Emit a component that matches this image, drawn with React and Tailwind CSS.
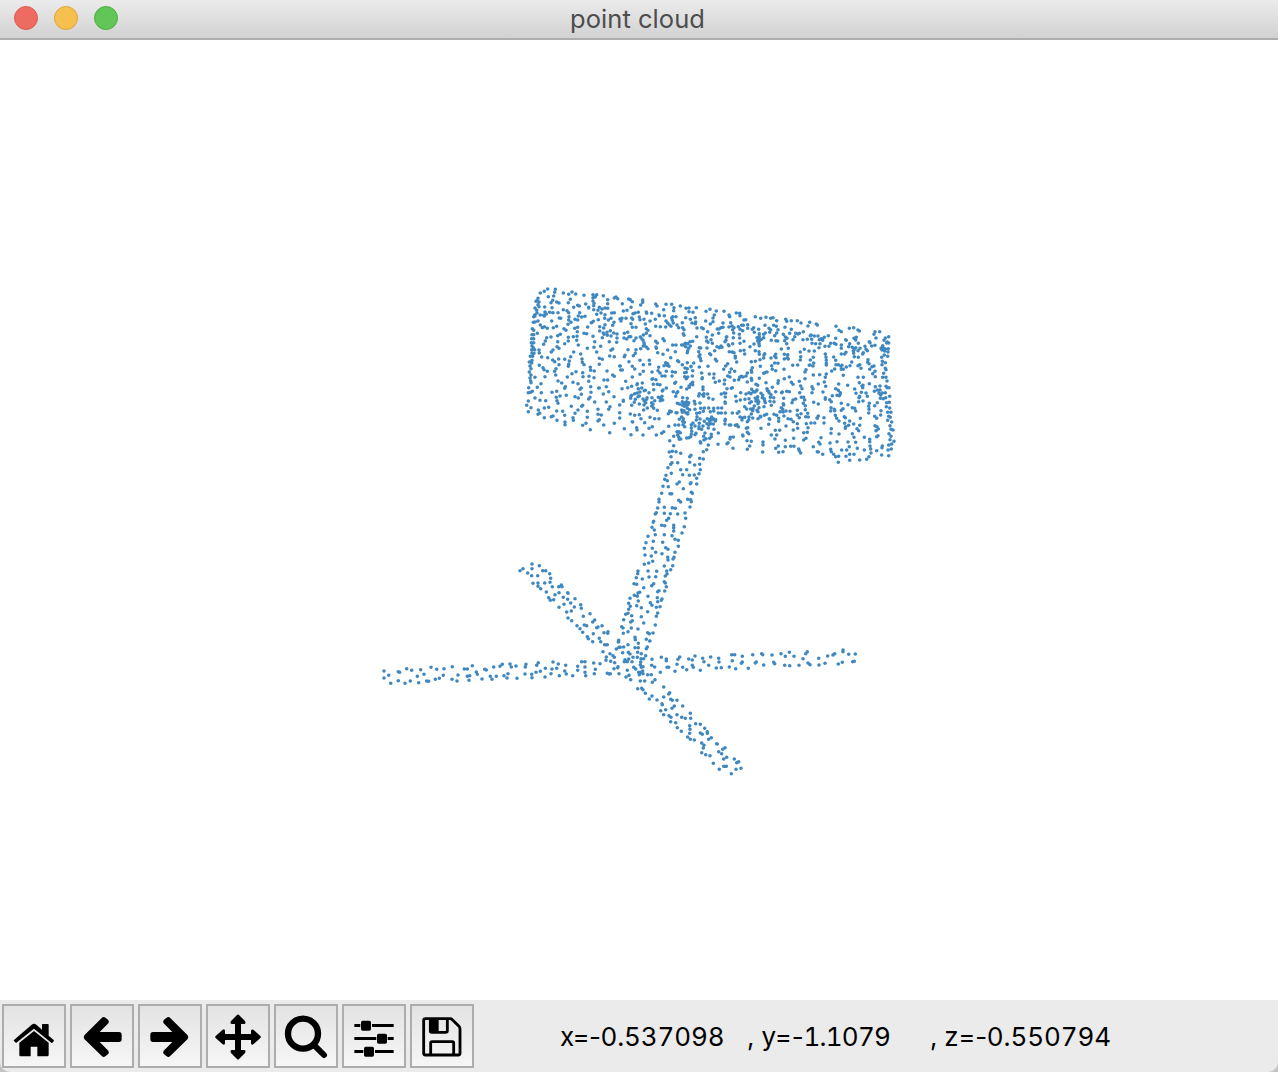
import React from "react";

// Dot coordinates are stored in thirds of a pixel, relative to each cluster's origin.
const LEFT_ARMS = "450,62 459,56 473,69 486,42 486,56 508,47 518,62 527,62 539,71 485,77 503,77 542,85 489,100 504,99 504,109 512,116 524,99 540,97 547,110 529,126 566,110 574,105 576,110 555,134 567,128 536,143 541,151 551,149 580,142 593,128 594,130 593,148 615,146 602,159 582,163 567,172 613,171 632,164 634,175 590,186 604,183 594,204 605,212 640,199 660,191 674,210 668,216 621,227 630,236 643,225 650,227 638,247 684,231 680,233 696,227 714,245 702,248 713,250 652,260 655,266 670,251 688,265 668,275 692,275 704,284 712,284 699,305 709,321 708,331 42,363 42,384 56,376 62,400 85,365 89,367 85,392 110,356 105,400 125,361 121,393 152,359 142,379 146,398 162,373 170,393 176,394 183,352 200,358 196,388 208,385 222,356 220,376 247,350 246,388 264,375 261,393 283,357 292,357 292,379 299,377 297,391 307,347 319,366 322,373 336,387 344,358 349,360 361,379 366,388 371,351 379,379 390,349 397,343 402,377 411,384 414,371 420,342 424,351 438,348 441,385 468,343 466,351 465,372 485,373 486,383 505,338 500,346 498,367 511,364 526,355 525,381 549,336 546,357 543,371 560,355 565,342 568,377 587,346 584,363 589,372 608,377 635,335 645,335 623,349 623,361 645,351 645,367 647,377 671,339 676,358 673,371 690,341 712,370 718,372";
const STEM = "178,66 187,64 198,65 212,70 183,80 243,76 239,80 186,98 203,98 239,97 182,103 174,113 254,105 269,103 269,85 280,87 280,65 212,119 230,119 184,130 168,136 218,134 238,136 253,135 267,131 271,119 260,145 260,162 164,148 172,152 208,156 201,162 243,158 241,161 159,169 175,170 220,176 155,190 180,191 185,191 244,187 247,190 147,208 147,216 206,211 212,216 233,208 242,209 244,215 143,234 163,232 187,233 196,235 240,231 136,252 139,248 163,250 181,251 203,252 225,249 227,265 176,265 170,271 131,274 130,277 155,286 164,287 191,286 191,293 191,303 223,290 126,292 133,300 216,309 114,319 136,314 163,314 186,317 195,328 205,331 130,334 108,338 158,337 205,349 103,355 127,355 167,353 174,358 137,367 195,367 156,371 105,375 124,378 173,382 192,382 189,387 174,390 103,403 116,399 128,394 163,408 188,407 182,419 84,423 83,431 114,423 140,424 170,423 171,432 79,443 97,447 117,441 137,440 166,438 72,461 80,463 131,461 125,467 163,455 166,459 169,470 101,473 164,483 143,485 147,482 84,489 89,487 73,496 82,499 114,499 60,505 142,503 156,507 154,511 85,513 143,515 121,518 126,526 56,520 61,529 80,527 94,533 139,532 150,530 56,538 113,545 143,549 47,553 54,550 65,557 139,559 94,560 41,569 67,572 62,576 101,579 136,585 35,590 39,594 64,594 84,597 54,605 40,610 113,608 118,611 129,609 75,622 76,629 26,631 25,636 109,628 120,633";
const RIGHT_ARMS = "26,5 54,14 85,10 119,3 112,21 109,26 75,23 85,23 19,27 27,22 31,22 41,21 0,41 9,47 13,52 2,64 14,68 24,80 12,86 1,101 27,101 38,38 55,37 60,42 83,37 94,41 107,47 69,52 45,59 56,57 43,65 52,65 66,65 82,52 93,56 101,56 92,66 91,74 99,80 23,83 52,91 71,82 77,87 94,82 86,97 98,93 88,104 99,101 92,97 48,111 57,106 62,119 91,123 104,123 113,104 124,104 135,119 127,127 126,58 125,76 134,81 154,52 169,57 169,62 151,97 171,82 176,82 195,94 201,73 204,58 209,51 218,82 230,89 236,57 247,60 255,48 247,76 250,82 271,91 278,55 282,65 296,76 302,51 326,55 327,66 319,84 334,83 365,44 374,44 367,62 358,81 377,86 397,49 397,66 394,70 415,85 428,44 439,66 436,69 455,41 458,44 461,75 486,45 491,67 494,71 513,41 526,49 524,76 538,37 539,77 552,49 567,76 579,56 587,41 592,35 594,69 600,74 626,55 627,75 645,70 653,48 669,45 674,41 685,72 697,67 699,30 699,35 716,43 736,42 728,65 733,64 83,146 95,145 99,149 106,160 118,177 126,168 161,141 161,171 179,158 176,162 141,180 156,191 157,194 182,178 187,181 201,181 193,198 186,205 218,198 152,212 167,209 161,224 177,227 183,232 201,224 182,245 197,248 215,232 226,235 241,220 242,235 202,263 214,274 239,257 240,268 239,280 257,251 271,253 284,265 292,275 292,280 271,279 277,283 233,291 241,298 253,300 296,298 304,293 275,309 282,316 280,324 320,311 322,312 345,323 338,328 275,338 287,344 300,347 326,335 335,341 310,370 341,357 350,352 373,357 386,365 380,368 328,388 341,379 349,379 378,388 393,385 364,401";
const PANEL_LEFT = "91,39 103,34 113,27 136,28 134,37 131,48 115,50 160,39 176,43 186,36 197,42 222,46 249,44 260,44 249,53 256,51 280,47 293,59 313,54 318,51 323,56 337,71 356,57 84,55 81,62 87,66 78,64 84,74 87,80 75,84 80,91 81,99 74,105 71,110 75,108 70,127 75,126 84,123 91,135 97,143 67,146 71,151 82,160 66,164 71,164 65,176 71,176 64,188 71,188 66,198 70,203 65,209 74,209 66,219 72,220 61,229 68,229 58,246 66,241 65,249 60,258 63,266 58,276 63,285 60,294 62,303 63,308 56,323 67,334 55,338 62,337 55,363 50,376 63,383 55,395 85,390 84,403 89,400 103,413 75,354 90,361 107,362 94,338 82,322 93,311 103,384 116,382 124,410 129,408 141,421 140,393 158,394 164,406 165,426 165,434 189,413 190,421 184,379 195,400 204,390 215,379 218,376 218,436 228,430 232,412 232,394 241,449 264,388 264,403 274,405 268,419 264,423 281,435 299,458 313,430 329,414 329,398 343,446 123,68 126,83 105,96 119,97 129,98 128,61 140,66 147,69 104,81 175,68 181,58 160,89 171,92 176,98 177,110 176,120 183,127 174,133 144,98 152,115 148,114 125,123 103,108 91,105 101,106 109,102 103,140 112,145 130,143 140,139 162,146 168,151 143,167 151,163 123,171 110,173 106,183 101,193 87,210 88,219 95,231 113,233 124,216 129,210 143,185 141,200 147,205 164,191 175,183 175,172 190,170 200,181 205,195 201,169 194,145 203,142 202,155 222,160 230,161 249,169 254,185 252,202 260,216 272,199 232,205 212,222 191,216 182,230 164,238 178,243 176,253 175,259 146,237 128,240 134,245 147,254 138,266 134,274 137,285 112,274 99,263 102,269 88,256 75,292 105,290 172,291 186,281 198,275 218,278 219,290 222,254 216,237 217,247 241,262 242,271 253,273 237,289 252,293 236,304 268,253 268,235 277,238 299,228 313,230 303,211 308,207 282,300 293,300 291,273 308,285 313,289 331,258 332,270 337,270 329,258 345,226 343,230 357,245 354,209 144,303 155,309 166,320 164,325 126,337 140,334 150,348 139,352 141,362 144,370 169,346 189,307 204,311 214,324 210,328 195,350 205,354 214,343 242,320 243,337 240,352 236,357 254,366 266,324 268,324 289,320 296,335 280,342 312,350 289,366 300,380 296,388 329,375 340,361 340,364 347,304 336,326 353,323 191,82 203,76 208,78 209,98 205,108 203,120 227,72 236,84 225,109 249,63 252,70 251,77 236,82 251,89 268,82 276,87 285,84 293,85 264,91 260,103 273,99 285,104 293,71 195,118 215,111 245,128 250,124 265,119 284,115 295,120 303,115 313,98 305,99 340,93 351,91 348,115 333,123 336,115 330,117 312,127 308,136 285,134 269,140 281,144 233,141 269,153 280,159 291,157 301,152 311,159 321,162 282,163 292,166 303,168 321,174 320,187 298,185 343,160 353,157 342,174 350,177 357,170 244,128 277,173";
const PANEL_RIGHT = "424,155 448,145 461,143 474,150 478,153 525,155 539,155 522,163 556,174 566,170 552,181 562,186 560,189 566,189 548,197 551,205 556,207 565,206 564,216 545,232 553,225 563,229 547,244 556,248 546,254 556,265 558,269 551,280 548,292 558,292 561,303 558,319 562,323 567,323 540,330 547,339 556,338 542,345 550,356 557,353 569,349 560,368 568,367 559,380 569,384 563,397 573,397 566,409 571,412 563,421 575,426 570,437 573,448 579,450 567,461 573,469 570,479 582,484 575,492 566,495 574,507 564,510 566,527 547,498 546,503 545,525 530,512 513,519 507,530 500,538 479,540 462,523 449,523 449,541 438,529 415,547 416,529 407,530 425,510 440,510 493,472 509,478 509,485 510,498 512,507 493,510 534,467 530,470 457,461 476,452 471,446 479,436 437,440 446,436 436,445 433,410 436,413 449,423 461,432 481,415 434,430 462,472 444,486 467,487 448,500 472,505 424,370 429,386 444,374 424,391 464,385 467,393 457,383 476,365 498,339 488,323 489,316 464,327 468,340 443,316 430,286 421,338 421,342 479,349 484,337 477,353 502,349 489,363 508,370 506,379 507,388 506,399 474,292 490,292 478,308 508,311 486,318 455,246 474,257 483,265 479,254 504,239 507,251 503,247 516,260 522,258 509,268 525,274 526,290 518,281 439,261 450,257 430,268 423,259 426,256 424,268 439,181 437,179 462,175 469,172 467,180 475,190 449,191 424,195 424,205 424,222 434,222 438,217 446,200 457,202 462,210 467,203 460,212 461,220 474,212 475,232 463,230 480,205 488,222 490,218 495,199 498,208 502,212 508,185 510,188 515,198 528,174 525,196 543,205 546,210 554,213 526,320 523,334 532,330 540,318 537,340 541,355 532,368 524,377 543,392 542,405 531,440 535,447 525,437 528,452 530,415 524,409";
const CENTER = "1,14 7,20 38,15 38,22 32,30 3,37 9,56 15,54 25,52 49,51 50,55 65,55 77,27 81,33 101,44 108,28 125,28 131,47 151,33 132,38 87,60 88,62 103,62 76,73 5,69 8,73 28,66 30,74 42,73 60,78 3,86 7,97 18,97 46,87 49,101 54,106 77,94 91,95 60,122 40,120 31,126 36,132 39,136 12,137 18,129 2,125 42,143 49,115 108,78 113,84 118,89 123,94 107,96 128,65 138,65 127,76 130,84 141,90 125,69 168,40 177,39 177,50 189,52 199,38 228,49 240,43 259,48 282,49 319,54 329,55 330,62 297,60 299,65 253,60 249,69 249,80 227,78 196,68 197,81 181,73 186,84 157,83 167,68 158,98 162,104 160,116 146,98 162,121 196,86 201,99 200,125 215,98 220,101 233,110 247,120 229,127 241,87 262,102 267,102 266,115 279,97 279,84 273,98 297,96 302,83 306,93 312,98 308,104 311,114 342,75 347,74 340,91 335,91 353,89 376,65 392,70 408,67 422,70 429,68 440,77 467,73 470,79 484,77 502,77 513,84 539,82 559,87 562,90 534,93 618,94 627,106 325,95 330,103 338,107 328,118 329,129 353,100 367,103 371,98 386,103 373,112 388,116 388,124 388,132 381,128 394,133 401,128 401,118 388,139 388,152 383,138 405,91 417,100 422,104 419,112 406,114 431,91 439,94 444,104 440,114 434,122 438,137 424,136 443,138 465,97 460,118 466,126 471,130 484,103 479,115 497,115 504,117 508,115 520,110 494,125 489,134 464,137 519,134 532,133 541,122 543,120 553,123 545,133 546,145 557,146 564,123 568,134 574,131 570,146 583,127 595,122 578,136 602,145 613,145 618,148 617,130 585,154 597,154 567,158 77,139 82,144 78,156 79,160 99,131 103,137 49,156 54,161 43,148 40,153 32,161 18,164 16,175 10,182 83,173 99,178 113,165 128,150 138,150 136,170 155,150 160,150 166,145 167,155 173,146 180,140 188,139 181,153 176,160 173,167 172,173 122,188 146,200 143,197 157,209 172,203 165,219 172,221 183,214 208,158 206,170 212,159 210,179 207,184 211,190 213,197 230,138 234,142 243,134 247,145 261,155 254,167 231,159 239,176 242,179 268,158 273,153 276,157 290,125 288,136 285,140 295,149 297,152 289,127 310,128 308,146 298,170 307,171 312,173 316,184 316,189 256,193 260,198 234,214 208,216 342,139 330,145 331,167 342,166 344,177 360,155 372,147 387,146 376,167 387,170 388,178 404,176 402,180 401,189 390,194 364,200 376,199 437,178 434,184 438,188 423,189 454,162 470,146 475,160 463,178 473,179 472,188 463,192 475,192 511,171 512,185 511,195 523,163 537,168 553,168 550,187 541,195 551,204 540,210 549,213 538,211 586,177 588,187 589,196 589,205 589,210 611,186 617,196 618,209 625,209 30,196 58,196 59,208 40,209 7,214 14,222 86,217 84,227 66,231 40,229 30,238 7,246 107,203 113,206 111,211 117,214 102,212 109,229 90,234 96,243 105,243 127,230 136,232 126,243 164,233 169,232 188,227 191,204 183,215 164,245 173,246 187,243 169,251 137,262 134,265 188,262 188,269 182,267 177,273 178,277 215,234 217,248 216,251 238,237 252,237 251,249 256,262 268,258 283,267 293,243 300,246 284,255 299,232 304,222 281,223 287,213 293,206 314,229 320,201 313,256 329,247 334,244 339,246 326,254 352,234 348,243 364,226 367,218 365,232 391,214 401,235 404,233 434,204 444,205 425,212 427,223 462,223 437,227 411,231 488,211 503,210 528,224 525,231 550,240 569,239 589,237 586,247 605,228 614,222 463,251 478,246 445,257 444,265 484,262 489,268 508,259 525,251 512,273 516,281 364,250 365,256 352,261 388,250 378,268 383,271 381,285 408,263 427,277 411,281 416,289 546,275 549,282 546,293 565,267 583,261 587,274 626,267 617,281 625,286 579,291 5,274 22,266 21,269 37,264 25,281 35,279 68,251 66,253 78,254 70,268 82,268 71,284 90,269 46,286 57,293 43,287 30,291 14,296 5,301 3,303 22,294 24,305 2,310 28,303 16,313 39,312 51,308 50,313 47,323 43,318 5,331 13,322 28,327 42,330 66,308 65,323 74,317 89,308 96,304 99,285 109,279 97,288 85,307 91,317 94,313 98,315 69,328 66,333 71,340 82,346 65,333 130,290 140,294 143,290 153,277 170,282 137,304 158,308 157,320 163,323 172,310 170,320 176,323 169,330 157,330 148,327 142,325 163,334 174,329 193,319 195,327 210,324 208,296 218,299 222,296 219,284 221,304 206,303 233,297 236,309 249,313 219,276 274,297 283,294 287,295 286,306 286,325 285,321 304,280 307,278 291,281 332,293 317,304 319,319 331,315 365,283 357,293 348,297 357,311 363,296 345,313 375,291 379,288 370,290 364,320 359,324 383,305 376,310 383,315 378,318 373,333 386,320 384,326 387,338 393,295 398,301 403,311 404,318 406,323 397,308 413,287 417,293 423,299 421,307 431,308 420,319 432,320 424,331 437,290 455,293 457,291 470,289 478,290 509,293 461,310 460,326 461,330 497,312 489,315 486,323 514,307 521,307 524,315 520,325 526,332 551,322 565,327 586,308 586,313 607,302 621,301 628,302 599,314 604,320 14,361 28,359 1,357 33,371 41,345 52,339 44,383 8,381 60,367 74,371 87,371 119,348 124,350 115,356 138,353 141,353 121,350 155,345 157,352 162,347 172,340 179,344 173,353 173,357 168,354 155,366 160,371 148,373 158,379 200,355 209,353 220,349 212,340 195,343 201,365 223,339 236,339 241,350 251,340 251,348 264,339 275,339 265,354 274,354 286,354 286,373 285,377 285,387 298,390 302,390 316,391 321,389 325,395 322,355 330,366 337,369 336,375 344,367 352,380 356,375 357,366 307,354 327,350 344,335 350,342 364,357 369,341 368,347 362,342 368,369 381,346 384,350 384,371 392,366 403,361 410,358 391,364 402,335 418,371 419,373 416,388 432,358 440,361 446,370 446,379 450,350 454,338 458,343 468,348 480,349 462,363 459,351 474,371 483,373 502,346 502,360 513,356 490,380 502,386 508,368 526,344 533,355 527,365 535,366 529,386 543,384 554,384 561,369 565,363 562,370 582,384 582,368 602,348 603,338 613,343 614,347 616,361 620,370 627,378 7,380 20,398 21,405 3,419 39,420 57,400 67,395 79,420 95,415 101,410 116,394 135,390 146,390 159,389 163,382 147,410 151,413 141,410 143,420 146,426 148,433 152,432 131,424 119,437 131,452 127,469 138,470 152,475 184,399 184,389 185,409 184,418 182,425 170,429 177,428 164,395 189,384 199,375 195,393 208,385 210,372 219,393 223,379 232,371 236,389 239,378 240,384 242,371 245,366 250,371 257,374 246,374 250,387 256,378 231,386 242,386 235,399 215,403 195,419 198,415 207,395 207,401 225,414 221,424 228,431 222,435 211,440 212,444 220,470 230,464 252,403 265,414 244,418 244,425 239,430 235,450 264,448 301,427 310,426 300,432 294,443 291,446 309,460 325,395 338,420 339,423 349,400 353,398 352,412 356,416 351,437 364,439 359,453 352,463 393,400 399,441 399,450 398,471 424,420 436,406 449,406 468,393 440,420 435,432 466,436 445,453 437,460 446,472 466,455 482,454 492,454 459,470 506,462 508,467 512,474 490,405 503,400 521,413 532,412 534,398 528,430 521,435 491,430 573,428 566,442 570,447 550,455 562,470 565,471 600,444 602,463 604,470 621,440 627,417 604,401 603,415 611,478 578,478";

const parse = (text, ox, oy) =>
  text.split(" ").map((pair) => {
    const [x, y] = pair.split(",").map(Number);
    return [ox + x / 3, oy + y / 3];
  });

const CLOUD = [
  ...parse(LEFT_ARMS, 370, 550),
  ...parse(STEM, 610, 430),
  ...parse(RIGHT_ARMS, 610, 640),
  ...parse(PANEL_LEFT, 510, 280),
  ...parse(PANEL_RIGHT, 700, 280),
  ...parse(CENTER, 630, 295),
]
  .map(([x, y]) => `M${x.toFixed(1)} ${(y - 40).toFixed(1)}h0`)
  .join("");

function ToolButton({ label, viewBox, children }) {
  return (
    <button
      aria-label={label}
      className="h-16 w-16 shrink-0 border-2 border-[#adadad] bg-linear-to-b from-[#e3e3e3] to-[#f6f6f6] text-black"
    >
      <svg viewBox={viewBox} className="block h-[60px] w-[60px]" fill="currentColor">
        {children}
      </svg>
    </button>
  );
}

function Toolbar() {
  return (
    <div className="flex gap-1 pl-0.5 pt-1">
      <ToolButton label="Home" viewBox="12 48 180 180">
        <path d="M102 123 L146 158 V195 Q146 199 142 199 H112 V170 H92 V199 H62 Q58 199 58 195 V158Z" />
        <path d="M42 150 L95 104 Q102 99 109 104 L126 119 V104 Q126 102 128 102 H144 Q146 102 146 104 V137 L161 150 Q163 152 161 154 L157 158 Q155 160 152 157 L102 116 L51 157 Q48 160 46 157 L42 153Q40 151 42 150Z" />
      </ToolButton>
      <ToolButton label="Back" viewBox="216 48 180 180">
        <path d="M253 136 L306 83 Q311 79 316 83 L324 89 Q329 94 325 100 L299 126 H357 Q365 126 365 134 V148 Q365 156 357 156 H299 L325 182 Q329 188 324 193 L316 199 Q311 203 306 199 L253 147 Q249 141 253 136Z" />
      </ToolButton>
      <ToolButton label="Forward" viewBox="420 48 180 180">
        <path transform="translate(816 0) scale(-1 1)" d="M253 136 L306 83 Q311 79 316 83 L324 89 Q329 94 325 100 L299 126 H357 Q365 126 365 134 V148 Q365 156 357 156 H299 L325 182 Q329 188 324 193 L316 199 Q311 203 306 199 L253 147 Q249 141 253 136Z" />
      </ToolButton>
      <ToolButton label="Pan" viewBox="-96 48 180 180">
        <path d="M-9 75 Q-6 72 -3 75 L15 93 Q19 102 12 102 H3 V132 H33 V123 Q33 117 40 119 L61 138 Q64 141 61 144 L40 163 Q33 167 33 159 V150 H3 V180 H12 Q19 180 15 189 L-3 207 Q-6 210 -9 207 L-27 189 Q-31 180 -24 180 H-15 V150 H-45 V159 Q-45 167 -52 163 L-73 144 Q-76 141 -73 138 L-52 119 Q-45 115 -45 123 V132 H-15 V102 H-24 Q-31 102 -27 93Z" />
      </ToolButton>
      <ToolButton label="Zoom" viewBox="108 48 180 180">
        <circle cx="189" cy="131" r="45" fill="none" stroke="currentColor" strokeWidth="19" />
        <path d="M223 166 L252 195" fill="none" stroke="currentColor" strokeWidth="18" strokeLinecap="round" />
      </ToolButton>
      <ToolButton label="Configure subplots" viewBox="312 48 180 180">
        <path d="M343 102H361V111H343ZM396 102H461V111H396ZM343 141H409V150H343ZM443 141H461V150H443ZM343 180H370V189H343ZM405 180H461V189H405Z" />
        <rect x="363" y="92" width="30" height="30" rx="5" />
        <rect x="411" y="131" width="30" height="30" rx="5" />
        <rect x="372" y="170" width="30" height="30" rx="5" />
      </ToolButton>
      <ToolButton label="Save" viewBox="516 48 180 180">
        <path d="M555 86 H630 Q634 86 637 89 L657 109 Q660 112 660 117 V190 Q660 195 655 195 H556 Q551 195 551 190 V91 Q551 86 556 86Z M571 86 V123 Q571 127 575 127 H617 Q622 127 622 123 V86 M572 195 V159 Q572 155 576 155 H637 Q641 155 641 159 V195" fill="none" stroke="currentColor" strokeWidth="8.5" />
        <path d="M568 86H596V128H572Q568 128 568 124Z" />
      </ToolButton>
    </div>
  );
}

export default function App() {
  return (
    <div className="flex h-[1072px] w-[1278px] flex-col overflow-hidden bg-[#c4c4c4] font-['Inter',sans-serif]">
      <header className="grid h-10 shrink-0 grid-cols-[1fr_auto_1fr] border-b-2 border-[#adadad] bg-linear-to-b from-[#ebebeb] to-[#d2d2d2]">
        <div className="flex gap-4 pl-3.5 pt-1.5">
          <span className="h-6 w-6 rounded-full border border-[#df5a50] bg-[#ed6b60]" />
          <span className="h-6 w-6 rounded-full border border-[#dda440] bg-[#f6c04f]" />
          <span className="h-6 w-6 rounded-full border border-[#4fad43] bg-[#62c656]" />
        </div>
        <h1 className="-translate-x-[1.5px] text-[25.5px] leading-[38px] tracking-[0.05px] text-[#4d4d4d]">point cloud</h1>
      </header>

      <main className="h-[960px] shrink-0 bg-white">
        <svg viewBox="0 0 1278 960" className="block h-[960px] w-[1278px]">
          <path d={CLOUD} fill="none" stroke="#3e87bf" strokeWidth="3.6" strokeLinecap="round" />
        </svg>
      </main>

      <footer className="flex h-[72px] shrink-0 rounded-b-[10px] bg-[#ebebeb]">
        <Toolbar />
        <div className="flex pl-[86px] pt-[18px] text-[26px] leading-[38px] text-black">
          <div className="w-[187px] whitespace-pre">
            <span className="tracking-[-0.7px]">x=-</span>
            <span className="tabular-nums tracking-[-0.1px]">0.537098</span>
          </div>
          <div className="w-[183px] whitespace-pre">
            <span className="tracking-[-0.2px]">, y=-</span>
            <span className="tabular-nums tracking-[-0.8px]">1.1079</span>
          </div>
          <div className="whitespace-pre">
            <span className="tracking-[-0.3px]">, z=-</span>
            <span className="tabular-nums tracking-[-0.1px]">0.550794</span>
          </div>
        </div>
      </footer>
    </div>
  );
}
